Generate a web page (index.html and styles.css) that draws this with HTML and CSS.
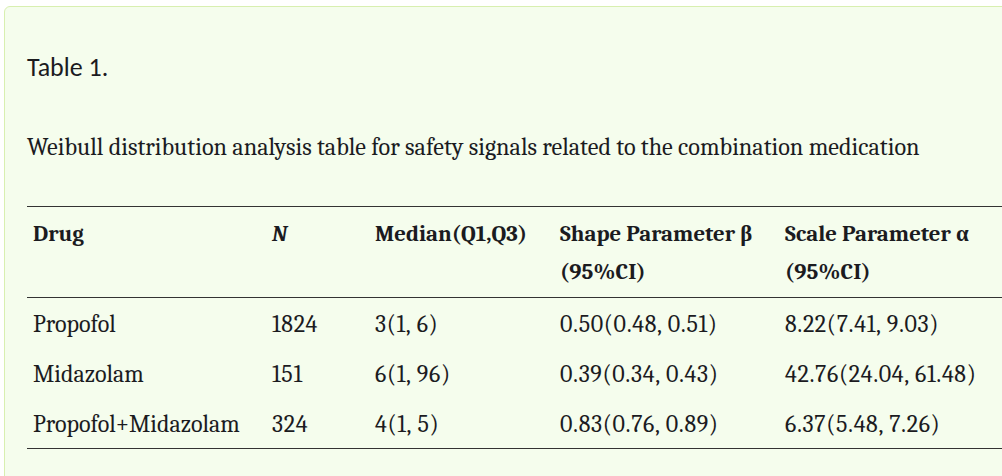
FILE: index.html
```html
<!DOCTYPE html>
<html lang="en">
<head>
<meta charset="utf-8">
<title>Table 1.</title>
<link rel="stylesheet" href="styles.css">
</head>
<body>
<section class="table-box">
  <h3 class="table-label">Table 1.</h3>
  <p class="table-caption">Weibull distribution analysis table for safety signals related to the combination medication</p>
  <table class="data-table">
    <colgroup>
      <col class="c-drug">
      <col class="c-n">
      <col class="c-median">
      <col class="c-shape">
      <col class="c-scale">
    </colgroup>
    <thead>
      <tr>
        <th>Drug</th>
        <th><em>N</em></th>
        <th>Median(Q1,Q3)</th>
        <th>Shape Parameter β<br>(95%CI)</th>
        <th>Scale Parameter α<br>(95%CI)</th>
      </tr>
    </thead>
    <tbody>
      <tr>
        <td>Propofol</td>
        <td class="num">1824</td>
        <td class="num">3(1, 6)</td>
        <td class="num">0.50(0.48, 0.51)</td>
        <td class="num">8.22(7.41, 9.03)</td>
      </tr>
      <tr>
        <td>Midazolam</td>
        <td class="num">151</td>
        <td class="num">6(1, 96)</td>
        <td class="num">0.39(0.34, 0.43)</td>
        <td class="num">42.76(24.04, 61.48)</td>
      </tr>
      <tr>
        <td>Propofol+Midazolam</td>
        <td class="num">324</td>
        <td class="num">4(1, 5)</td>
        <td class="num">0.83(0.76, 0.89)</td>
        <td class="num">6.37(5.48, 7.26)</td>
      </tr>
    </tbody>
  </table>
</section>
</body>
</html>
```
FILE: styles.css
```css
html, body {
  margin: 0;
  padding: 0;
  overflow: hidden;
  background: #ffffff;
}

body {
  color: #1b1b1f;
  font-family: "Caladea", "Liberation Serif", serif;
}

.table-box {
  box-sizing: border-box;
  width: 1040px;
  height: 520px;
  margin: 6px 0 0 4px;
  padding: 44px 22px 20px 22px;
  background: #f5fded;
  border: 1px solid #d8efb0;
  border-radius: 6px;
}

.table-label {
  margin: 0;
  font-family: "Carlito", "Liberation Sans", sans-serif;
  font-size: 26px;
  font-weight: normal;
  line-height: 32px;
}

.table-caption {
  margin: 48px 0 0 0;
  font-size: 24.2px;
  line-height: 32px;
}

.data-table {
  margin-top: 43px;
  border-collapse: collapse;
  table-layout: fixed;
  width: 987px;
  font-size: 24px;
  line-height: 38px;
}

.c-drug { width: 239px; }
.c-n { width: 103px; }
.c-median { width: 185px; }
.c-shape { width: 225px; }
.c-scale { width: 235px; }

.data-table thead tr {
  border-top: 1px solid #333333;
  border-bottom: 1px solid #333333;
}

.data-table tbody tr:last-child {
  border-bottom: 1px solid #333333;
}

.data-table th,
.data-table td {
  padding: 7px 6px 5px 6px;
  text-align: left;
  vertical-align: top;
  white-space: nowrap;
}

.data-table th {
  font-size: 22.8px;
  font-weight: bold;
  padding-top: 8px;
  padding-bottom: 6px;
}

.data-table th em {
  font-style: italic;
}

.data-table td.num {
  letter-spacing: 0.65px;
}
```
